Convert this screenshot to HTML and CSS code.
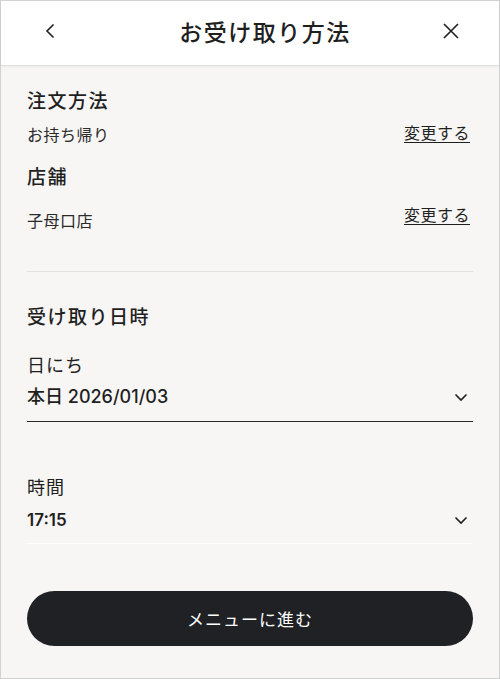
FILE: index.html
```html
<!DOCTYPE html>
<html lang="ja">
<head>
    <meta charset="UTF-8">
    <meta name="viewport" content="width=device-width, initial-scale=1.0">
    <title>お受け取り方法</title>
    <link rel="stylesheet" href="styles.css">
</head>
<body>
    <div class="frame">
        <header class="topbar">
            <button class="icon-btn" aria-label="戻る">
                <svg width="16" height="16" viewBox="0 0 16 16"><path d="M10.5 1.5 L4 8 L10.5 14.5" fill="none" stroke="#1f1f1f" stroke-width="1.6"/></svg>
            </button>
            <h1 class="title">お受け取り方法</h1>
            <button class="icon-btn" aria-label="閉じる">
                <svg width="16" height="16" viewBox="0 0 16 16"><path d="M1 1 L15 15 M15 1 L1 15" fill="none" stroke="#1f1f1f" stroke-width="1.6"/></svg>
            </button>
        </header>

        <main class="content">
            <section class="info">
                <h2 class="heading">注文方法</h2>
                <div class="row row-first">
                    <span class="value">お持ち帰り</span>
                    <a class="change" href="#">変更する</a>
                </div>
                <h2 class="heading heading-shop">店舗</h2>
                <div class="row row-shop">
                    <span class="value">子母口店</span>
                    <a class="change" href="#">変更する</a>
                </div>
            </section>

            <hr class="divider">

            <section class="datetime">
                <h2 class="heading">受け取り日時</h2>
                <label class="field-label">日にち</label>
                <div class="select select-date">
                    <span>本日 2026/01/03</span>
                    <svg width="14" height="10" viewBox="0 0 14 10"><path d="M1.5 2.5 L7 8 L12.5 2.5" fill="none" stroke="#1f1f1f" stroke-width="1.6"/></svg>
                </div>

                <label class="field-label field-time">時間</label>
                <div class="select select-time">
                    <span>17:15</span>
                    <svg width="14" height="10" viewBox="0 0 14 10"><path d="M1.5 2.5 L7 8 L12.5 2.5" fill="none" stroke="#1f1f1f" stroke-width="1.6"/></svg>
                </div>
            </section>

            <button class="next-btn">メニューに進む</button>
        </main>
    </div>
</body>
</html>
```

FILE: styles.css
```css
* {
    box-sizing: border-box;
}
body {
    margin: 0;
    font-family: Inter, "Noto Sans CJK JP", "Noto Sans", sans-serif;
    color: #1f1f1f;
}
.frame {
    width: 500px;
    height: 679px;
    border: 1px solid #d2d2d2;
    background: #f7f6f4;
    display: flex;
    flex-direction: column;
}
.topbar {
    height: 65px;
    background: #fff;
    border-bottom: 1px solid #e2e2e2;
    box-shadow: 0 1px 2px rgba(0, 0, 0, 0.05);
    display: flex;
    align-items: center;
    justify-content: space-between;
    padding: 0 38px 4px 40px;
}
.icon-btn {
    background: none;
    border: none;
    padding: 0;
    width: 20px;
    height: 20px;
    display: flex;
    align-items: center;
    justify-content: center;
}
.title {
    margin: 0 0 0 28px;
    font-size: 23px;
    font-weight: 500;
    letter-spacing: 1.5px;
}
.content {
    padding: 0 26px;
    display: flex;
    flex-direction: column;
}
.heading {
    margin: 0;
    font-size: 19px;
    font-weight: 500;
    letter-spacing: 1.5px;
    line-height: 28px;
}
.info .heading {
    margin-top: 22px;
}
.info .heading-shop {
    margin-top: 18px;
}
.row {
    display: flex;
    justify-content: space-between;
    align-items: center;
    font-size: 16px;
    letter-spacing: 0.5px;
    line-height: 22px;
}
.row-first {
    margin-top: 8px;
}
.row-first .change {
    position: relative;
    top: -2px;
}
.row-shop {
    margin-top: 18px;
}
.row-shop .change {
    position: relative;
    top: -6px;
}
.value {
    color: #2a2a2a;
}
.change {
    color: #1f1f1f;
    text-decoration: underline;
    text-underline-offset: 3px;
    margin-right: 3px;
}
.divider {
    margin: 39px 0 0;
    border: none;
    border-top: 1px solid #e3e2df;
}
.datetime {
    display: flex;
    flex-direction: column;
}
.datetime .heading {
    margin-top: 32px;
}
.field-label {
    font-size: 18px;
    letter-spacing: 1px;
    line-height: 26px;
    margin-top: 21px;
}
.select {
    display: flex;
    justify-content: space-between;
    align-items: center;
    padding-right: 5px;
}
.select-date {
    font-size: 18px;
    font-weight: 500;
    line-height: 26px;
    margin-top: 5px;
    padding-bottom: 11px;
    border-bottom: 1.5px solid #2a2a2a;
}
.field-time {
    margin-top: 53px;
}
.select-time {
    font-size: 17px;
    font-weight: 600;
    line-height: 24px;
    margin-top: 7px;
    padding-bottom: 11px;
    border-bottom: 1px solid #fdfdfc;
}
.next-btn {
    margin-top: 47px;
    height: 55px;
    border: none;
    border-radius: 28px;
    background: #202124;
    color: #fff;
    font-family: "Noto Sans CJK JP", "Noto Sans", sans-serif;
    font-size: 17px;
    letter-spacing: 1px;
}
```
